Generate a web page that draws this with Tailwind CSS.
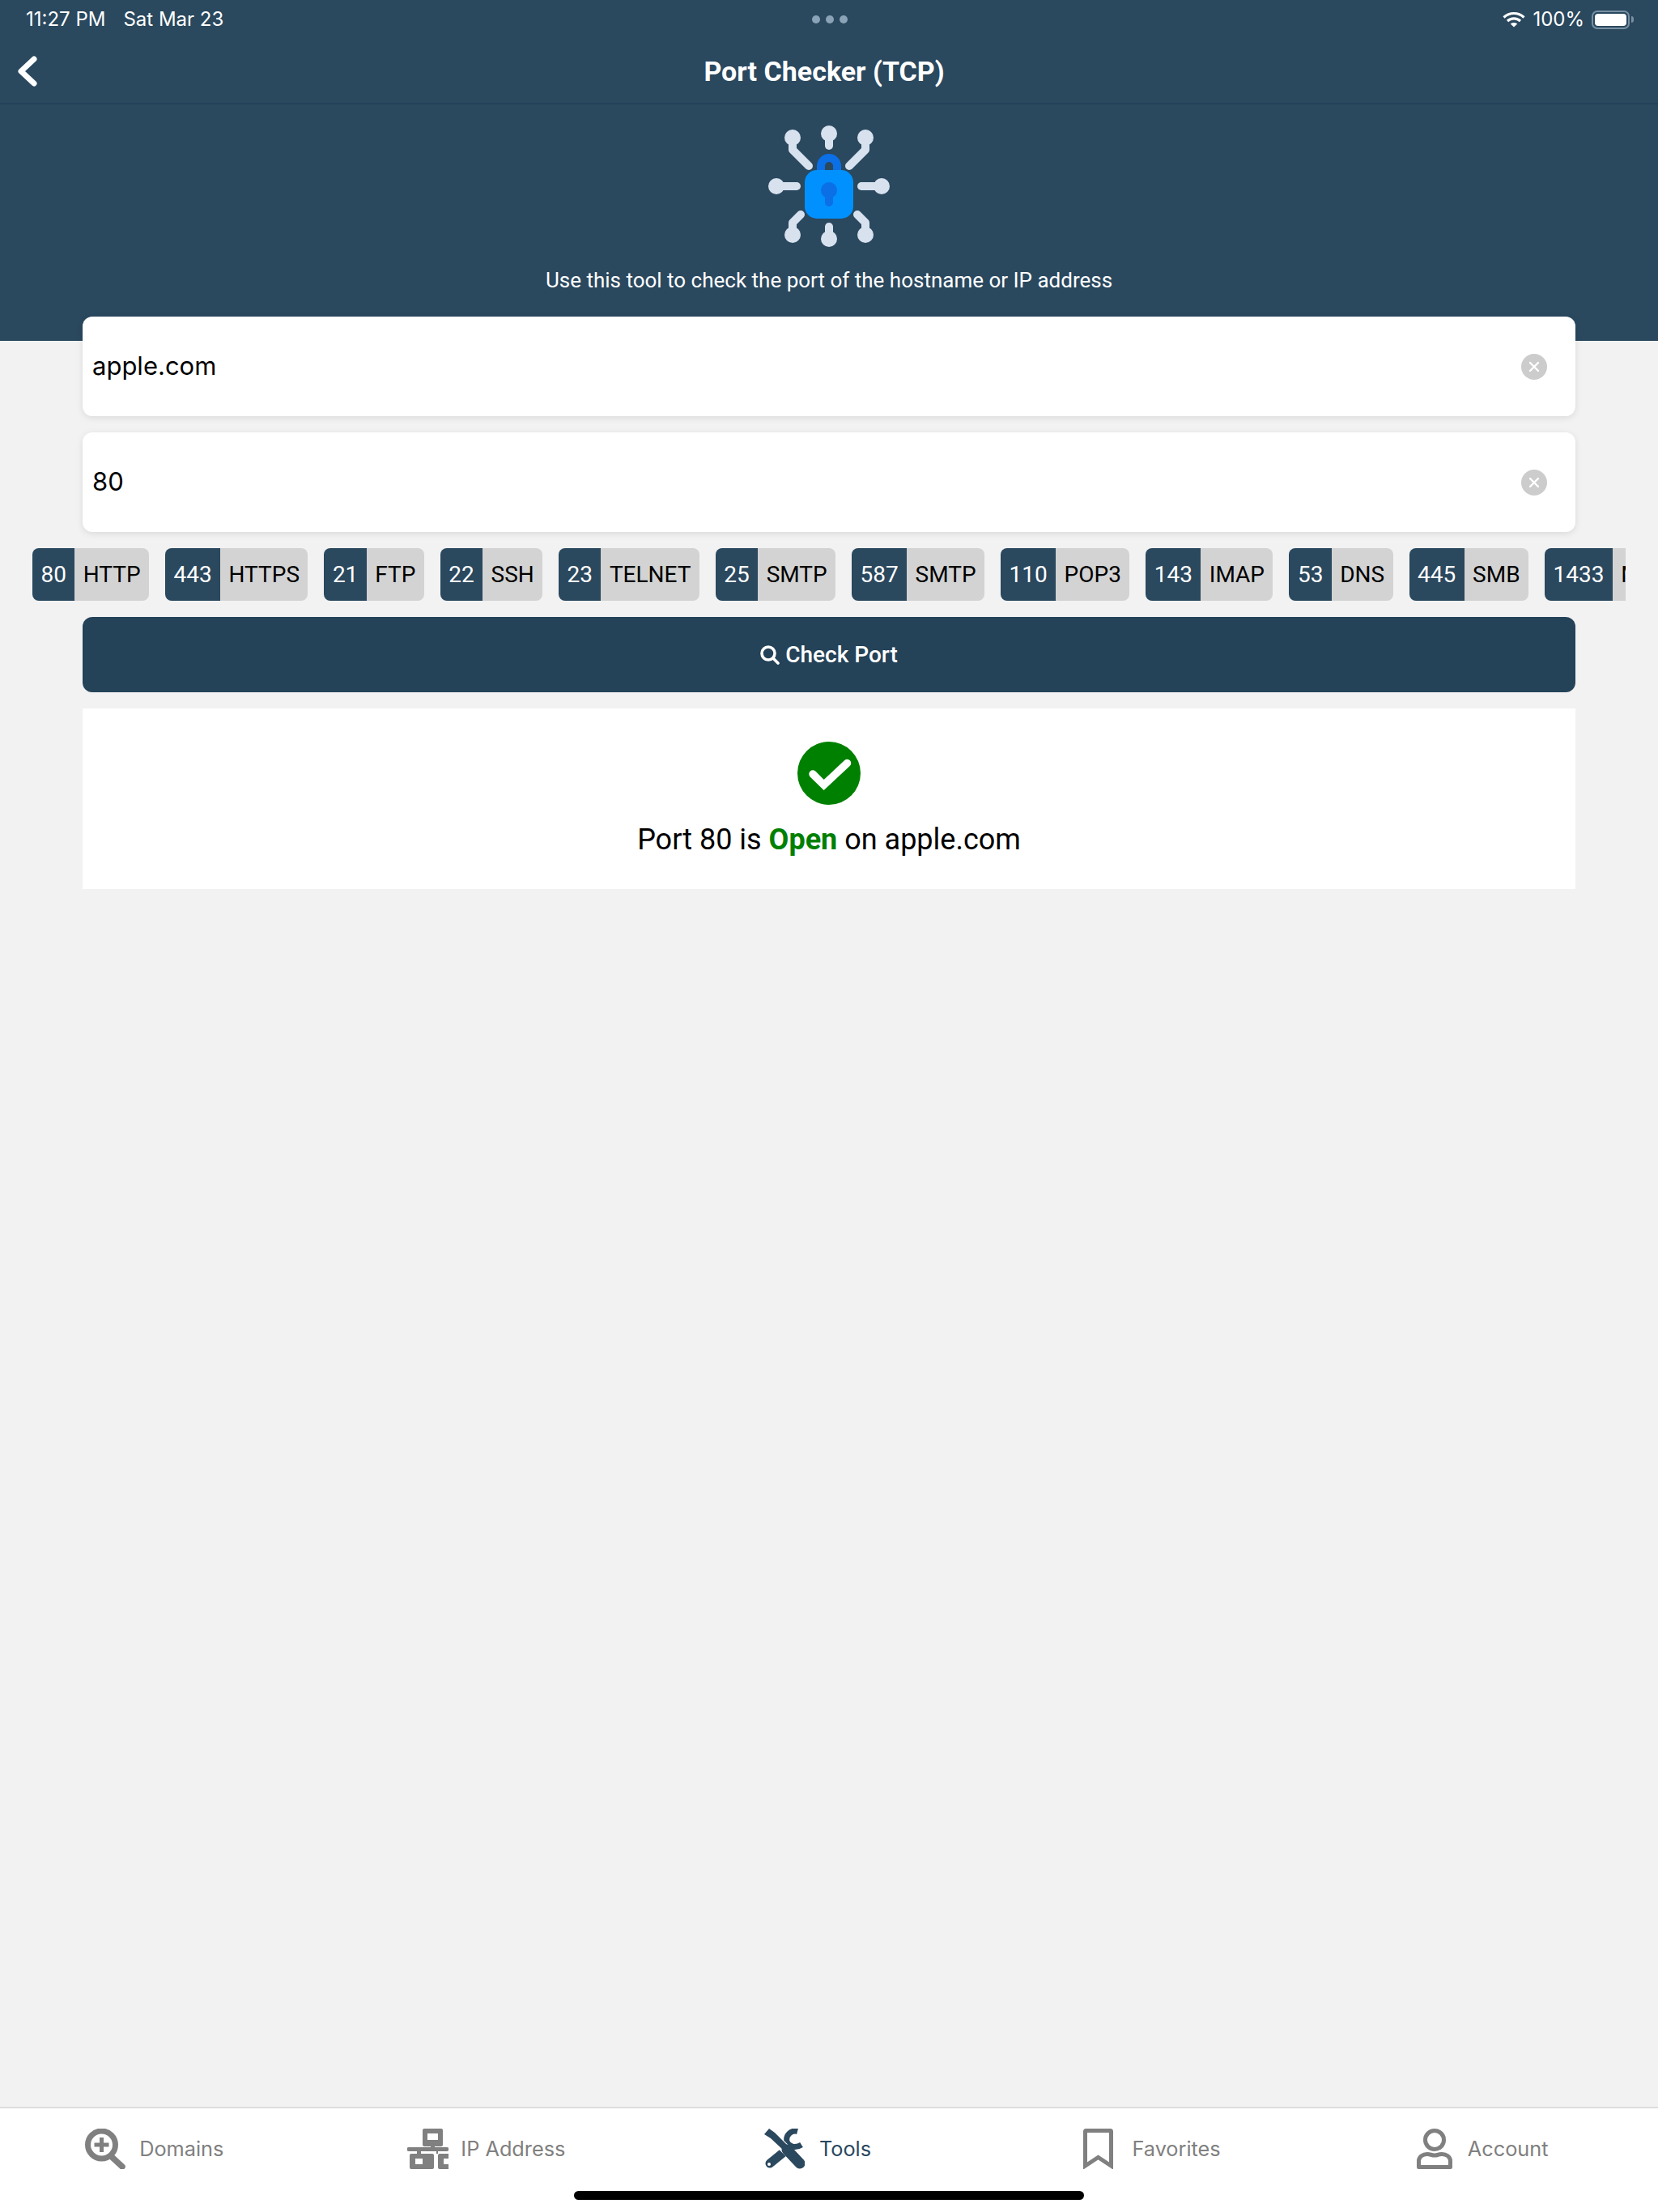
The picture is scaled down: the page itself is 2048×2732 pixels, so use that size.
<!doctype html>
<html>
<head>
<meta charset="utf-8">
<script src="https://cdn.jsdelivr.net/npm/@tailwindcss/browser@4"></script>
</head>
<body class="m-0">
<div class="relative w-[2048px] h-[2732px] overflow-hidden flex flex-col bg-[#f2f2f2] font-['Roboto',sans-serif]">
  <header class="h-[421px] shrink-0 bg-[#2a485e] flex flex-col text-white">
    <div class="h-[48px] shrink-0 relative flex items-center justify-between pl-[32px] pr-[30px] font-['Inter',sans-serif] text-[24px]">
      <div class="flex gap-[22px]"><span>11:27 PM</span><span>Sat Mar 23</span></div>
      <div class="absolute left-[1003px] top-[19px] flex gap-[7px]">
        <span class="w-[10px] h-[10px] rounded-full bg-[#8aa3b6]"></span><span class="w-[10px] h-[10px] rounded-full bg-[#8aa3b6]"></span><span class="w-[10px] h-[10px] rounded-full bg-[#8aa3b6]"></span>
      </div>
      <div class="flex items-center gap-[9px]">
        <svg class="w-[28px] h-[20px]" viewBox="0 0 28 20" fill="none" stroke="#fff" stroke-width="3.2"><path d="M1.5 7.5C8.5 .8 19.5 .8 26.5 7.5"/><path d="M6 12C10.5 7.8 17.5 7.8 22 12"/><path d="M14 19.5L9.8 15.6C12 13.6 16 13.6 18.2 15.6Z" fill="#fff" stroke="none"/></svg>
        <span>100%</span>
        <span class="flex items-center gap-[2px]">
          <span class="w-[47px] h-[23px] rounded-[7px] border-2 border-[#7890a2] p-[2px] block"><span class="block w-full h-full rounded-[4px] bg-white"></span></span>
          <span class="w-[3px] h-[8px] rounded-r-full bg-[#7890a2]"></span>
        </span>
      </div>
    </div>
    <div class="h-[81px] shrink-0 relative flex items-center justify-center border-b-2 border-[#24425a] pr-[12px]">
      <svg class="absolute left-[22px] top-[21px] w-[24px] h-[38px]" viewBox="0 0 24 38" fill="none" stroke="#fff" stroke-width="7" stroke-linecap="round" stroke-linejoin="round"><path d="M20 4L4 19L20 34"/></svg>
      <h1 class="text-[34px] leading-none font-bold">Port Checker (TCP)</h1>
    </div>
    <div class="flex flex-col items-center pt-[26px]">
      <svg class="w-[150px] h-[150px]" viewBox="147 75 450 450" fill="none">
        <g fill="#d8e2ef"><circle cx="372" cy="105" r="30"/><circle cx="237" cy="120" r="30"/><circle cx="507" cy="120" r="30"/><circle cx="177" cy="300" r="30"/><circle cx="567" cy="300" r="30"/><circle cx="237" cy="480" r="30"/><circle cx="507" cy="480" r="30"/><circle cx="372" cy="495" r="30"/></g>
        <g stroke="#d8e2ef" stroke-width="30" stroke-linecap="round" stroke-linejoin="round"><path d="M372 105V150"/><path d="M237 120V165L297 225"/><path d="M507 120V165L447 225"/><path d="M177 300H252"/><path d="M567 300H492"/><path d="M237 480V435L267 405"/><path d="M507 480V435L477 405"/><path d="M372 495V450"/></g>
        <path d="M342 245V225a30 30 0 0 1 60 0V245" stroke="#0b6fe6" stroke-width="30"/>
        <rect x="282" y="240" width="180" height="180" rx="45" fill="#0091ff"/>
        <circle cx="372" cy="315" r="30" fill="#0b6fe6"/>
        <path d="M372 320V360" stroke="#0b6fe6" stroke-width="30" stroke-linecap="round"/>
      </svg>
      <p class="mt-[26px] text-[26px] leading-[30px]">Use this tool to check the port of the hostname or IP address</p>
    </div>
  </header>

  <main class="flex flex-col px-[102px] -mt-[30px] relative">
    <div class="h-[123px] rounded-[12px] bg-white shadow-[0_2px_8px_rgba(0,0,0,0.1)] flex items-center justify-between pl-[12px] pr-[35px] font-['Inter',sans-serif] text-[31px]">
      <span>apple.com</span>
      <span class="w-[32px] h-[32px] rounded-full bg-[#cccccc] flex items-center justify-center">
        <svg class="w-[14px] h-[14px]" viewBox="0 0 14 14" stroke="#fff" stroke-width="2.4" stroke-linecap="round"><path d="M2 2L12 12M12 2L2 12"/></svg>
      </span>
    </div>
    <div class="mt-[20px] h-[123px] rounded-[12px] bg-white shadow-[0_2px_8px_rgba(0,0,0,0.1)] flex items-center justify-between pl-[12px] pr-[35px] font-['Inter',sans-serif] text-[31px]">
      <span>80</span>
      <span class="w-[32px] h-[32px] rounded-full bg-[#cccccc] flex items-center justify-center">
        <svg class="w-[14px] h-[14px]" viewBox="0 0 14 14" stroke="#fff" stroke-width="2.4" stroke-linecap="round"><path d="M2 2L12 12M12 2L2 12"/></svg>
      </span>
    </div>

    <div class="mt-[20px] -ml-[62px] w-[1968px] h-[65px] overflow-hidden flex gap-[20px] text-[28px] leading-[65px] whitespace-nowrap">
      <div class="flex shrink-0 rounded-[8px] overflow-hidden"><span class="bg-[#2a485e] text-white px-[10.43px]">80</span><span class="bg-[#d3d3d3] text-black px-[10.43px]">HTTP</span></div>
      <div class="flex shrink-0 rounded-[8px] overflow-hidden"><span class="bg-[#2a485e] text-white px-[10.43px]">443</span><span class="bg-[#d3d3d3] text-black px-[10.43px]">HTTPS</span></div>
      <div class="flex shrink-0 rounded-[8px] overflow-hidden"><span class="bg-[#2a485e] text-white px-[10.43px]">21</span><span class="bg-[#d3d3d3] text-black px-[10.43px]">FTP</span></div>
      <div class="flex shrink-0 rounded-[8px] overflow-hidden"><span class="bg-[#2a485e] text-white px-[10.43px]">22</span><span class="bg-[#d3d3d3] text-black px-[10.43px]">SSH</span></div>
      <div class="flex shrink-0 rounded-[8px] overflow-hidden"><span class="bg-[#2a485e] text-white px-[10.43px]">23</span><span class="bg-[#d3d3d3] text-black px-[10.43px]">TELNET</span></div>
      <div class="flex shrink-0 rounded-[8px] overflow-hidden"><span class="bg-[#2a485e] text-white px-[10.43px]">25</span><span class="bg-[#d3d3d3] text-black px-[10.43px]">SMTP</span></div>
      <div class="flex shrink-0 rounded-[8px] overflow-hidden"><span class="bg-[#2a485e] text-white px-[10.43px]">587</span><span class="bg-[#d3d3d3] text-black px-[10.43px]">SMTP</span></div>
      <div class="flex shrink-0 rounded-[8px] overflow-hidden"><span class="bg-[#2a485e] text-white px-[10.43px]">110</span><span class="bg-[#d3d3d3] text-black px-[10.43px]">POP3</span></div>
      <div class="flex shrink-0 rounded-[8px] overflow-hidden"><span class="bg-[#2a485e] text-white px-[10.43px]">143</span><span class="bg-[#d3d3d3] text-black px-[10.43px]">IMAP</span></div>
      <div class="flex shrink-0 rounded-[8px] overflow-hidden"><span class="bg-[#2a485e] text-white px-[10.43px]">53</span><span class="bg-[#d3d3d3] text-black px-[10.43px]">DNS</span></div>
      <div class="flex shrink-0 rounded-[8px] overflow-hidden"><span class="bg-[#2a485e] text-white px-[10.43px]">445</span><span class="bg-[#d3d3d3] text-black px-[10.43px]">SMB</span></div>
      <div class="flex shrink-0 rounded-[8px] overflow-hidden"><span class="bg-[#2a485e] text-white px-[10.43px]">1433</span><span class="bg-[#d3d3d3] text-black px-[10.43px]">MSSQL</span></div>
    </div>

    <button class="mt-[20px] h-[93px] rounded-[12px] bg-[#244258] text-white flex items-center justify-center gap-[7px] text-[28px] font-medium">
      <svg class="w-[24px] h-[24px]" viewBox="0 0 24 24" fill="none" stroke="#fff" stroke-width="3.6" stroke-linecap="round"><circle cx="10" cy="10" r="8"/><path d="M16 16L22 22"/></svg>
      <span>Check Port</span>
    </button>

    <section class="mt-[20px] h-[223px] bg-white flex flex-col items-center pt-[41px]">
      <svg class="w-[78px] h-[78px]" viewBox="0 0 78 78"><circle cx="39" cy="39" r="39" fill="#008000"/><path d="M19 40L32.7 53.5L61.5 26.5" fill="none" stroke="#fff" stroke-width="9.5" stroke-linejoin="miter" stroke-linecap="round"/></svg>
      <p class="mt-[21px] text-[36px] leading-[44px] text-black">Port 80 is <b class="font-bold text-[#008000]">Open</b> on apple.com</p>
    </section>
  </main>

  <nav class="absolute left-0 bottom-0 w-full h-[130px] bg-white border-t-2 border-[#dddddd] grid grid-cols-5 items-start font-['Inter',sans-serif] text-[25.3px] leading-[52px] text-[#808080] pt-[24px]">
    <div class="flex items-center justify-center gap-[17px] pr-[28px]">
      <svg class="w-[50px] h-[50px]" viewBox="0 0 50 50" fill="none" stroke="#808080"><circle cx="20.5" cy="20" r="17" stroke-width="7"/><path d="M32 34L46 47" stroke-width="7.5" stroke-linecap="round"/><path d="M20.5 11V29M11.5 20H29.5" stroke-width="5"/></svg>
      <span>Domains</span>
    </div>
    <div class="flex items-center justify-center gap-[15px] pr-[27px]">
      <svg class="w-[51px] h-[50px]" viewBox="0 0 51 50" fill="#808080" fill-rule="evenodd"><path d="M21 0H42a2 2 0 0 1 2 2V20a2 2 0 0 1-2 2H34V23H49a2 2 0 0 1 0 5H38V31H51V50H40a2 2 0 0 1-2-2V33a2 2 0 0 1 2-2H36V28H17V31H31a2 2 0 0 1 2 2V48a2 2 0 0 1-2 2H5a2 2 0 0 1-2-2V33a2 2 0 0 1 2-2H12V28H2a2 2 0 0 1 0-5H29V22H21a2 2 0 0 1-2-2V2a2 2 0 0 1 2-2ZM25 6V14H38V6ZM10 37V44H19V37ZM45 37V44H51V37Z"/></svg>
      <span>IP Address</span>
    </div>
    <div class="flex items-center justify-center gap-[18px] pr-[28px] text-[#2a485e]">
      <svg class="w-[50px] h-[50px]" viewBox="0 0 50 50" fill="none">
        <path d="M41 3.5A10.5 10.5 0 0 0 28 16C30 22 38 25 46 20" stroke="#2a485e" stroke-width="7"/>
        <path d="M23 30L7 43" stroke="#2a485e" stroke-width="11" stroke-linecap="round"/>
        <circle cx="6" cy="44" r="2" fill="#fff"/>
        <path d="M6 5L32 31" stroke="#fff" stroke-width="12"/>
        <path d="M0 7L6 0L13 5L29 21L24 27L8 12Z" fill="#2a485e"/>
        <path d="M28 26L44 43" stroke="#2a485e" stroke-width="13" stroke-linecap="round"/>
      </svg>
      <span>Tools</span>
    </div>
    <div class="flex items-center justify-center gap-[23px] pr-[21px]">
      <svg class="w-[37px] h-[50px]" viewBox="0 0 37 50" fill="none" stroke="#808080" stroke-width="5"><path d="M2.5 46V3.5a1 1 0 0 1 1-1H33.5a1 1 0 0 1 1 1V46L18.5 35.5Z"/></svg>
      <span>Favorites</span>
    </div>
    <div class="flex items-center justify-center gap-[19px] pr-[24px]">
      <svg class="w-[44px] h-[50px]" viewBox="0 0 44 50" fill="none" stroke="#808080" stroke-width="5" stroke-linejoin="round"><circle cx="22" cy="14" r="11.5"/><path d="M2.5 47.5V40C2.5 34.5 7.5 31.5 13 31.5C17 31.5 18 33 22 33C26 33 27 31.5 31 31.5C36.5 31.5 41.5 34.5 41.5 40V47.5Z"/></svg>
      <span>Account</span>
    </div>
  </nav>
  <div class="absolute left-[709px] top-[2706px] w-[630px] h-[11px] rounded-full bg-black"></div>
</div>
</body>
</html>
